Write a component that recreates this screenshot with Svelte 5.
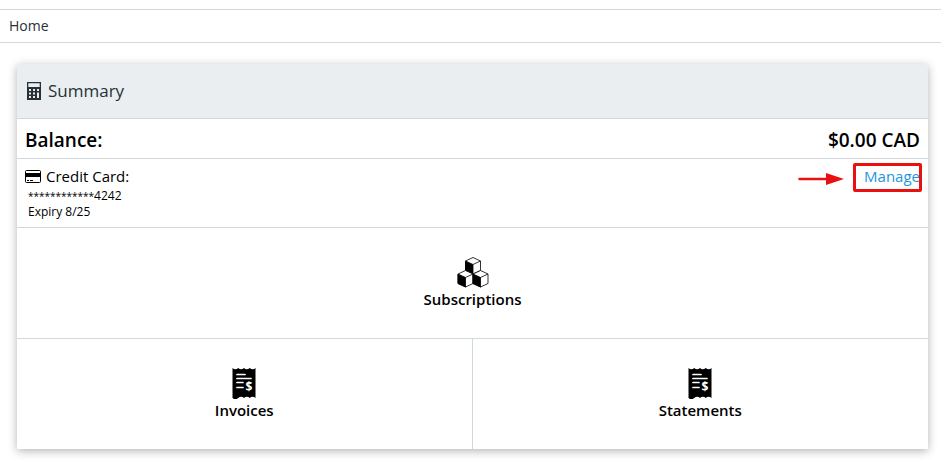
<script>
  const balance = "$0.00 CAD";

  const card = {
    mask: "************",
    lastFour: "4242",
    expiry: "8/25",
  };

  const documents = [
    { label: "Invoices", href: "#invoices" },
    { label: "Statements", href: "#statements" },
  ];
</script>

<nav class="breadcrumb">
  <a href="#home">Home</a>
</nav>

<main class="panel">
  <header>
    <svg width="14" height="18" viewBox="0 0 14 18" aria-hidden="true">
      <path
        fill="#263238"
        fill-rule="evenodd"
        d="M0 0h14v18H0zM1.300 1.300v3.700h11.400V1.300zM2 7v2h2V7zM6 7v2h2V7zM10 7v2h2V7zM2 10.500v2h2v-2zM6 10.500v2h2v-2zM2 14v2h2v-2zM6 14v2h2v-2zM10 10.500v5.500h2v-5.500z"
      />
    </svg>
    <h1>Summary</h1>
  </header>

  <section class="balance">
    <span>Balance:</span>
    <span>{balance}</span>
  </section>

  <section class="payment">
    <div>
      <h2>
        <svg width="16" height="14" viewBox="0 0 16 14" aria-hidden="true">
          <rect x="0.5" y="1.5" width="15" height="12" rx="1" fill="#fff" stroke="#000" />
          <path d="M0 4h16v4H0z" />
          <path d="M2 11.500h2M5 11.500h3" stroke="#000" />
        </svg>
        Credit Card:
      </h2>
      <p><span class="mask">{card.mask}</span>{card.lastFour}</p>
      <p>Expiry {card.expiry}</p>
    </div>
    <div class="manage">
      <svg class="arrow" width="46" height="14" viewBox="0 0 46 14" aria-hidden="true">
        <path d="M1.500 7H30" stroke="#e81010" stroke-width="2.500" stroke-linecap="round" />
        <path d="M28 1l18 6-18 6z" fill="#e81010" />
      </svg>
      <a href="#manage">Manage</a>
    </div>
  </section>

  <a class="tile" href="#subscriptions">
    <svg width="32" height="32" viewBox="0 0 32 32" aria-hidden="true">
      {#each [[16, 1.5], [8.5, 14.5], [23.5, 14.5]] as [x, y]}
        <g transform="translate({x} {y})" stroke="#000" stroke-width="0.8" stroke-linejoin="round">
          <path d="M0 0l7.500 3.500v9.500L0 16.500l-7.500-3.500v-9.500z" fill="#fff" />
          <path d="M-7.500 3.500L0 7v9.500l-7.500-3.500z" />
          <path d="M0 7l7.500-3.500" fill="none" />
        </g>
      {/each}
    </svg>
    Subscriptions
  </a>

  <div class="documents">
    {#each documents as doc}
      <a class="tile" href={doc.href}>
        <svg width="32" height="32" viewBox="0 0 32 32" aria-hidden="true">
          <path d="M4.500 1q3 2.500 5.750 0 2.700 2.500 5.750 0 2.700 2.500 5.750 0 3 2.500 5.750 0v30q-3-2.500-5.750 0-2.700-2.500-5.750 0-2.700-2.500-5.750 0-3 2.500-5.750 0z" />
          <path
            d="M9 7.500h8M9 11.500h14M9 15.500h6M9 20.500h6"
            stroke="#fff"
            stroke-width="1.700"
            stroke-linecap="round"
          />
          <text x="21" y="24" text-anchor="middle" fill="#fff">$</text>
        </svg>
        {doc.label}
      </a>
    {/each}
  </div>
</main>

<style>
  :global(body) {
    margin: 0;
    background: #fff;
    color: #000;
    font-family: "Segoe UI", "Open Sans", "Noto Sans", sans-serif;
  }

  a {
    color: inherit;
    text-decoration: none;
  }

  h1,
  h2,
  p {
    margin: 0;
    font-weight: 400;
  }

  .breadcrumb {
    margin-top: 9px;
    padding: 0 9px;
    border-top: 1px solid #cfd8dc;
    border-bottom: 1px solid #cfd8dc;
    color: #263238;
    font-size: 14px;
    line-height: 32px;
  }

  .panel {
    margin: 21px 13px 18px 17px;
    border-radius: 3px 3px 0 0;
    box-shadow: 0 2px 10px rgba(0, 0, 0, 0.3);
  }

  header {
    display: flex;
    align-items: center;
    gap: 7px;
    padding: 0 10px;
    border-bottom: 1px solid #cfd8dc;
    border-radius: 3px 3px 0 0;
    background: #eaeef1;
    color: #263238;
  }

  h1 {
    font-size: 17px;
    line-height: 54px;
  }

  .balance {
    display: flex;
    justify-content: space-between;
    padding: 3px 8px 0;
    border-bottom: 1px solid #cfd8dc;
    font-size: 19px;
    font-weight: 600;
    line-height: 36px;
  }

  .payment {
    display: flex;
    justify-content: space-between;
    align-items: flex-start;
    padding: 5px 8px 7px;
    border-bottom: 1px solid #cfd8dc;
  }

  h2 {
    display: flex;
    align-items: center;
    gap: 5px;
    font-size: 15px;
    line-height: 24px;
  }

  .payment p {
    padding-left: 3px;
    font-size: 12px;
    line-height: 16px;
  }

  .payment .mask {
    font-size: 10px;
  }

  .manage {
    position: relative;
    color: #1e96dc;
    font-size: 15px;
    line-height: 24px;
  }

  .manage::after {
    content: "";
    position: absolute;
    inset: -1px -2px -4px -11px;
    border: 3px solid #e81010;
    border-radius: 2px;
    pointer-events: none;
  }

  .arrow {
    position: absolute;
    top: 8px;
    right: 76px;
  }

  .tile {
    display: flex;
    flex-direction: column;
    align-items: center;
    justify-content: center;
    padding: 28px 0;
    font-size: 15px;
    font-weight: 600;
    line-height: 22px;
  }

  .tile text {
    font-size: 12px;
    font-weight: 700;
  }

  .documents {
    display: grid;
    grid-template-columns: 1fr 1fr;
    border-top: 1px solid #cfd8dc;
  }

  .documents .tile:first-child {
    border-right: 1px solid #cfd8dc;
  }
</style>
